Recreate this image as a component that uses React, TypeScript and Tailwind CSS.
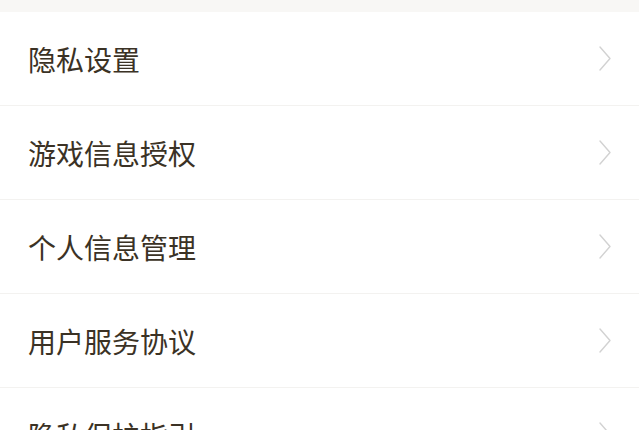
import React from "react";

const items = ["隐私设置", "游戏信息授权", "个人信息管理", "用户服务协议", "隐私保护指引"];

function Chevron() {
  return (
    <svg width="12" height="25" viewBox="0 0 12 25" fill="none" className="shrink-0">
      <polyline points="1,1 11,12.5 1,24" stroke="#d2d2d2" strokeWidth="1.4" strokeLinecap="round" strokeLinejoin="round" />
    </svg>
  );
}

export default function App() {
  return (
    <div
      className="w-[644px] h-[430px] overflow-hidden bg-white"
      style={{ fontFamily: '"Noto Sans CJK SC", "Noto Sans", sans-serif' }}
    >
      <div className="w-[639px]">
        <div className="h-[12px] bg-[#f8f7f5]" />
        {items.map((t) => (
          <div
            key={t}
            className="h-[94px] flex items-center justify-between pl-[28px] pr-[28px] bg-white border-b border-[#f3f2f0]"
          >
            <span className="text-[28px] leading-none text-[#3b3225]">{t}</span>
            <Chevron />
          </div>
        ))}
      </div>
    </div>
  );
}
